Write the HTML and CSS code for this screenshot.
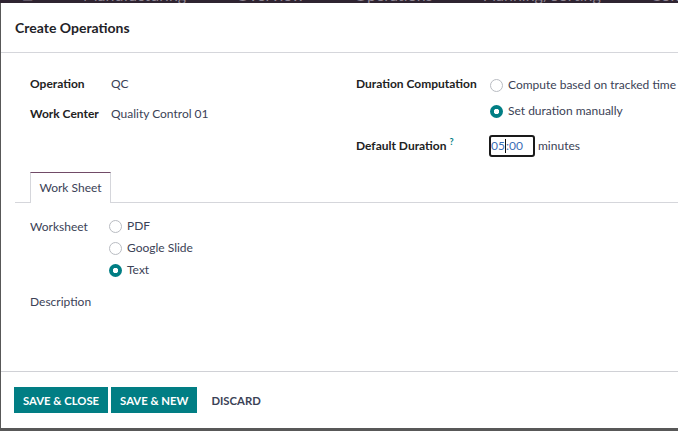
FILE: index.html
```html
<!DOCTYPE html>
<html lang="en">
<head>
  <meta charset="UTF-8" />
  <title>Create Operations</title>
  <link rel="stylesheet" href="styles.css">
</head>
<body>
  <div class="topbar">
    <span class="menu-icon">▦</span>
    <span>Manufacturing</span>
    <span>Overview</span>
    <span>Operations</span>
    <span>Planning/Sorting</span>
    <span>Configuration</span>
  </div>

  <div class="modal">
    <div class="modal-header">
      <h4>Create Operations</h4>
    </div>

    <div class="modal-body">
      <div class="fields">
        <div class="group left">
          <div class="row">
            <label>Operation</label>
            <span class="value">QC</span>
          </div>
          <div class="row">
            <label>Work Center</label>
            <span class="value">Quality Control 01</span>
          </div>
        </div>

        <div class="group right">
          <div class="row radios-row">
            <label>Duration Computation</label>
            <div class="radios">
              <div class="radio"><span class="dot"></span>Compute based on tracked time</div>
              <div class="radio"><span class="dot checked"></span>Set duration manually</div>
            </div>
          </div>
          <div class="row duration-row">
            <label>Default Duration <sup>?</sup></label>
            <div class="duration">
              <span class="time-input">05<span class="caret"></span>:00</span>
              <span class="unit">minutes</span>
            </div>
          </div>
        </div>
      </div>

      <div class="tabs">
        <div class="tab active">Work Sheet</div>
      </div>

      <div class="tab-pane">
        <div class="row sheet-row">
          <label>Worksheet</label>
          <div class="radios tight">
            <div class="radio"><span class="dot"></span>PDF</div>
            <div class="radio"><span class="dot"></span>Google Slide</div>
            <div class="radio"><span class="dot checked"></span>Text</div>
          </div>
        </div>
        <div class="row">
          <label>Description</label>
        </div>
      </div>
    </div>

    <div class="modal-footer">
      <button class="btn primary">SAVE &amp; CLOSE</button>
      <button class="btn primary">SAVE &amp; NEW</button>
      <button class="btn link">DISCARD</button>
    </div>
  </div>

  <div class="under">10:00</div>
</body>
</html>
```

FILE: styles.css
```css
body {
  margin: 0;
  font-family: Lato, "Open Sans", sans-serif;
  font-size: 12px;
  color: #212529;
  background-color: #585858;
  height: 431px;
  overflow: hidden;
}

.topbar {
  height: 3px;
  overflow: hidden;
  display: flex;
  align-items: flex-end;
  gap: 50px;
  padding-left: 22px;
  background-color: #2f2431;
  color: #8e8593;
  font-size: 16px;
  line-height: 16px;
  white-space: nowrap;
}

.menu-icon {
  font-size: 12px;
}

.modal {
  margin-left: 1px;
  height: 425px;
  background-color: #fff;
  display: flex;
  flex-direction: column;
}

.modal-header {
  height: 49px;
  border-bottom: 1px solid #d5d6db;
  display: flex;
  align-items: center;
  padding-left: 14px;
}

.modal-header h4 {
  margin: 0;
  font-size: 14px;
  font-weight: 700;
  color: #1f2328;
}

.modal-body {
  flex: 1;
  padding: 0 0 0 14px;
}

.fields {
  display: flex;
  padding-top: 19px;
  height: 100px;
}

.group.left {
  width: 326px;
  padding-left: 15px;
}

.group.right {
  flex: 1;
}

.row {
  display: flex;
  align-items: flex-start;
  line-height: 24px;
}

.group.left .row {
  height: 30px;
}

.group.left label {
  width: 81px;
}

label {
  font-weight: 700;
  color: #222;
}

.value {
  color: #3b4256;
}

.group.right label {
  width: 134px;
}

.radios {
  display: flex;
  flex-direction: column;
}

.radio {
  display: flex;
  align-items: center;
  height: 26px;
  color: #3b4256;
  white-space: nowrap;
}

.radios.tight .radio {
  height: 22px;
}

.dot {
  width: 11px;
  height: 11px;
  border: 1px solid #b9bcc2;
  border-radius: 50%;
  margin-right: 5px;
  flex: none;
}

.dot.checked {
  width: 13px;
  height: 13px;
  border: none;
  background: radial-gradient(circle, #fff 0 2.4px, #017e84 3px);
}

.duration-row {
  margin-top: 10px;
}

sup {
  color: #017e84;
  font-size: 9px;
  line-height: 0;
}

.duration {
  display: flex;
  align-items: center;
  height: 24px;
}

.time-input {
  width: 42px;
  height: 18px;
  line-height: 18px;
  border: 2px solid #1a1a1a;
  border-radius: 3px;
  color: #3c6fb6;
  display: flex;
  align-items: center;
  margin-left: -1px;
}

.caret {
  width: 1px;
  height: 14px;
  background-color: #111;
}

.unit {
  margin-left: 3px;
  color: #3b4256;
}

.tabs {
  display: flex;
  border-bottom: 1px solid #d5d6db;
  height: 30px;
}

.tab {
  margin-left: 15px;
  width: 79px;
  text-align: center;
  line-height: 30px;
  color: #3b4256;
  border: 1px solid #d5d6db;
  border-top-color: #714b67;
  border-bottom: none;
  background: #fff;
  margin-bottom: -1px;
  height: 30px;
}

.tab-pane {
  padding: 12px 0 0 15px;
}

.sheet-row {
  height: 75px;
}

.sheet-row label {
  width: 79px;
}

.tab-pane label {
  color: #3b4256;
  font-weight: 400;
}

.modal-footer {
  height: 56px;
  border-top: 1px solid #d0d1d6;
  display: flex;
  align-items: center;
  gap: 3px;
  padding-left: 13px;
}

.btn {
  font-family: inherit;
  font-size: 11.3px;
  font-weight: 700;
  height: 26px;
  padding: 0 9px;
  border: none;
  border-radius: 0;
  cursor: pointer;
}

.btn.primary {
  background-color: #017e84;
  color: #fff;
}

.btn.link {
  background: none;
  color: #3b4256;
  margin-left: 2px;
}

.under {
  height: 3px;
  overflow: hidden;
  padding-left: 433px;
  color: #111;
  font-size: 12px;
  line-height: 14px;
}
```
